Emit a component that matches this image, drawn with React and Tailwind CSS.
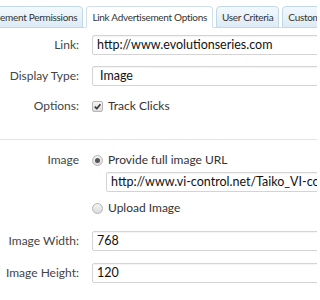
const font = { fontFamily: 'Lato, "Open Sans", sans-serif' };

const tabs = [
  { label: 'Advertisement Permissions', active: false },
  { label: 'Link Advertisement Options', active: true },
  { label: 'User Criteria', active: false },
  { label: 'Custom Criteria', active: false },
];

function Row({ label, children, className = '' }) {
  return (
    <div className={`flex items-center ${className}`}>
      <div className="w-[79px] shrink-0 text-right text-[12px] text-[#444]">{label}</div>
      <div className="ml-[13px] flex-1 min-w-0">{children}</div>
    </div>
  );
}

function Field({ value, pad = 'pl-[4px]' }) {
  return (
    <div
      className={`h-[20px] w-[260px] flex items-center rounded-[2px] border border-[#d4d4d4] bg-white ${pad} text-[12.5px] text-[#111] whitespace-nowrap overflow-hidden shadow-[inset_0_1px_1px_rgba(0,0,0,0.05)]`}
    >
      {value}
    </div>
  );
}

function Radio({ checked }) {
  return (
    <span className="inline-flex h-[11px] w-[11px] items-center justify-center rounded-full border border-[#b5b5b5] bg-gradient-to-b from-[#f4f4f4] to-[#dcdcdc]">
      {checked && <span className="h-[5px] w-[5px] rounded-full bg-[#555]" />}
    </span>
  );
}

export default function App() {
  return (
    <div className="h-[300px] w-[317px] overflow-hidden bg-white" style={font}>
      {/* tab strip */}
      <div className="pt-[6px] flex items-end border-b border-[#d0e0ea] h-[28px]">
        <div className="-ml-[40px] flex items-end gap-[3px]">
          {tabs.map((t) => (
            <div
              key={t.label}
              className={`h-[22px] -mb-px flex items-center whitespace-nowrap rounded-t-[4px] border px-[5px] text-[10px] tracking-[-0.3px] text-[#333] ${
                t.active
                  ? 'border-[#d0e0ea] border-b-white bg-white'
                  : 'border-[#c2d8e6] bg-gradient-to-b from-[#f3f9fd] to-[#dcebf5]'
              }`}
            >
              {t.label}
            </div>
          ))}
        </div>
      </div>

      <div className="pt-[7px]">
        <Row label="Link:">
          <Field value="http://www.evolutionseries.com" />
        </Row>
        <Row label="Display Type:" className="mt-[11px]">
          <Field value="Image" pad="pl-[7px]" />
        </Row>
        <Row label="Options:" className="mt-[11px]">
          <label className="flex items-center gap-[5px] text-[12px] text-[#333]">
            <span className="flex h-[11px] w-[11px] items-center justify-center rounded-[2px] border border-[#b5b5b5] bg-gradient-to-b from-[#f4f4f4] to-[#dcdcdc]">
              <svg viewBox="0 0 10 10" className="h-[9px] w-[9px]">
                <path d="M2 5.2 L4.2 7.4 L8.2 2.4" fill="none" stroke="#333" strokeWidth="1.8" />
              </svg>
            </span>
            Track Clicks
          </label>
        </Row>

        <div className="mt-[24px] border-t border-[#d7e7ee]" />

        <Row label="Image" className="mt-[11px]">
          <label className="flex items-center gap-[5px] text-[12px] text-[#333]">
            <Radio checked />
            Provide full image URL
          </label>
        </Row>
        <div className="ml-[106px] mt-[3px]">
          <Field value="http://www.vi-control.net/Taiko_VI-control-600x100.jpg" />
        </div>
        <div className="ml-[92px] mt-[7px]">
          <label className="flex items-center gap-[5px] text-[12px] text-[#333]">
            <Radio />
            Upload Image
          </label>
        </div>

        <Row label="Image Width:" className="mt-[14px]">
          <Field value="768" />
        </Row>
        <Row label="Image Height:" className="mt-[12px]">
          <Field value="120" />
        </Row>
      </div>
    </div>
  );
}
